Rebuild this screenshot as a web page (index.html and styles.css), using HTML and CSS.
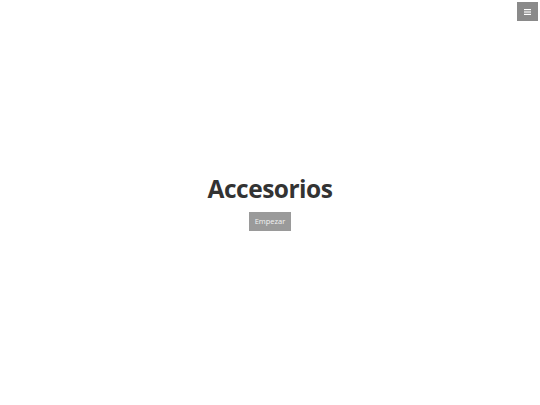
FILE: index.html
```html
<!DOCTYPE html>
<html lang="es">
<head>
<meta charset="utf-8">
<title>Accesorios</title>
<link rel="stylesheet" href="styles.css">
</head>
<body>
<header class="topbar">
  <button class="menu-btn" aria-label="Menú">
    <svg width="7" height="6" viewBox="0 0 7 6"><rect x="0" y="0" width="7" height="1.2" fill="#fff"/><rect x="0" y="2.4" width="7" height="1.2" fill="#fff"/><rect x="0" y="4.8" width="7" height="1.2" fill="#fff"/></svg>
  </button>
</header>
<main class="hero">
  <h1 class="title">Accesorios</h1>
  <a class="cta" href="#">Empezar</a>
</main>
</body>
</html>
```
FILE: styles.css
```css
html, body {
  margin: 0;
  padding: 0;
  background: #fff;
  height: 100%;
}
body {
  font-family: "Open Sans", "Liberation Sans", sans-serif;
  color: #333;
}
.topbar {
  display: flex;
  justify-content: flex-end;
  padding: 2px 2px 0 0;
  height: 19px;
}
.menu-btn {
  width: 21px;
  height: 19px;
  border: 0;
  padding: 0;
  background: #8a8a8a;
  display: flex;
  align-items: center;
  justify-content: center;
  cursor: pointer;
}
.hero {
  display: flex;
  flex-direction: column;
  align-items: center;
  padding-top: 151px;
}
.title {
  margin: 0;
  font-size: 24.5px;
  font-weight: 700;
  line-height: 34px;
  color: #333;
  letter-spacing: -0.5px;
}
.cta {
  margin-top: 6px;
  display: block;
  width: 42px;
  height: 19px;
  line-height: 19px;
  text-align: center;
  background: #9a9a9a;
  color: #f2f2f2;
  font-size: 7.5px;
  text-decoration: none;
}
```
